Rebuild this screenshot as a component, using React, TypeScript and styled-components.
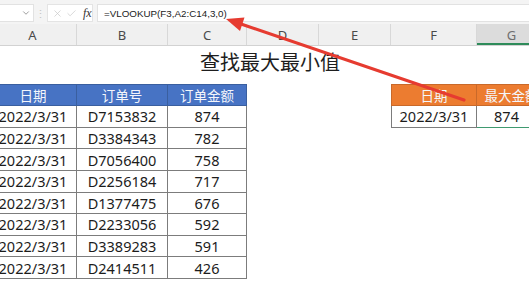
import { Fragment } from 'react';
import styled, { createGlobalStyle } from 'styled-components';
import { Check, ChevronDown, X } from 'lucide-react';

const COLS = '88px 91px 79px 72px 72px 86px 70px';

const GlobalStyle = createGlobalStyle`
  html, body { margin: 0; padding: 0; background: #fff; overflow: hidden; }
  body { font-family: "Noto Sans", "Noto Sans CJK SC", sans-serif; }
`;

const Page = styled.div`
  position: relative;
  width: 529px;
  height: 284px;
  overflow: hidden;
  background: #fff;
`;

const FormulaBar = styled.div`
  height: 24px;
  box-sizing: border-box;
  padding: 4px 0 2px 0;
  display: flex;
  align-items: stretch;
  background: #f4f4f4;
`;

const NameBox = styled.div`
  width: 34px;
  box-sizing: border-box;
  background: #fff;
  border: 1px solid #e2e2e2;
  border-left: none;
  display: flex;
  align-items: center;
  justify-content: flex-end;
  padding-right: 2px;
  color: #8a8a8a;
`;

const Dots = styled.div`
  width: 13px;
  display: flex;
  align-items: center;
  justify-content: center;
  color: #c4c4c4;
  font-size: 11px;
  line-height: 1;
`;

const ButtonBox = styled.div`
  width: 46px;
  box-sizing: border-box;
  background: #fff;
  border: 1px solid #e4e4e4;
  display: flex;
  align-items: center;
  gap: 3px;
  padding-left: 4px;
  color: #c8c8c8;
`;

const Fx = styled.span`
  font-family: "Liberation Serif", serif;
  font-style: italic;
  font-size: 12px;
  color: #333;
  margin-left: 3px;
`;

const FormulaInput = styled.div`
  flex: 1;
  margin-left: 4px;
  box-sizing: border-box;
  background: #fff;
  border: 1px solid #e2e2e2;
  border-right: none;
  display: flex;
  align-items: center;
  padding-left: 6px;
  font-family: "Liberation Sans", Arial, sans-serif;
  font-size: 9.8px;
  color: #222;
`;

const ColumnHeaders = styled.div`
  display: grid;
  grid-template-columns: ${COLS};
  margin-left: -11px;
  height: 22px;
  background: #f0f0f0;
  border-bottom: 1px solid #d2d2d2;
  box-sizing: border-box;
`;

const ColHead = styled.div<{ $active?: boolean }>`
  display: flex;
  align-items: center;
  justify-content: center;
  font-family: "Noto Sans", sans-serif;
  font-size: 13px;
  color: ${(p) => (p.$active ? '#6e6e6e' : '#4a4a4a')};
  background: ${(p) => (p.$active ? '#dcdcdc' : 'transparent')};
  border-right: 1px solid #d8d8d8;
  box-shadow: ${(p) => (p.$active ? 'inset 0 -2px 0 #2e8b5a' : 'none')};
`;

const Sheet = styled.div`
  display: grid;
  grid-template-columns: ${COLS};
  grid-template-rows: 38px 22px repeat(8, 21.625px);
  margin-left: -11px;
`;

const Title = styled.div`
  grid-column: 1 / -1;
  display: flex;
  align-items: center;
  justify-content: center;
  padding: 0 0 7px 4px;
  font-size: 20px;
  color: #1e1e1e;
  font-family: "Noto Sans CJK SC", sans-serif;
`;

const Cell = styled.div<{ $fill?: string; $top?: boolean; $left?: boolean; $line?: string; $shift?: number }>`
  display: flex;
  align-items: center;
  justify-content: center;
  box-sizing: border-box;
  white-space: nowrap;
  overflow: hidden;
  background: ${(p) => p.$fill || '#fff'};
  color: ${(p) => (p.$fill ? '#f4f6fb' : '#1c1c1c')};
  font-family: ${(p) => (p.$fill ? '"Noto Sans CJK SC", sans-serif' : '"Noto Sans", sans-serif')};
  font-size: ${(p) => (p.$fill ? '13.5px' : '14.5px')};
  border-right: 1px solid ${(p) => p.$line || '#7c7c7c'};
  border-bottom: 1px solid ${(p) => p.$line || '#7c7c7c'};
  border-top: ${(p) => (p.$top ? `1px solid ${p.$line || '#7c7c7c'}` : 'none')};
  border-left: ${(p) => (p.$left ? `1px solid ${p.$line || '#7c7c7c'}` : 'none')};
  padding-right: ${(p) => p.$shift || 0}px;
`;

const Blank = styled.div``;

// red annotation arrow drawn over the sheet
const Arrow = styled.svg`
  position: absolute;
  left: 0;
  top: 0;
  pointer-events: none;
`;

const rows = [
  ['D7153832', '874'],
  ['D3384343', '782'],
  ['D7056400', '758'],
  ['D2256184', '717'],
  ['D1377475', '676'],
  ['D2233056', '592'],
  ['D3389283', '591'],
  ['D2414511', '426'],
];

const BLUE = '#4773c4';
const BLUE_LINE = '#3a5f9f';
const ORANGE = '#ec7c30';

export default function App() {
  return (
    <Page>
      <GlobalStyle />
      <FormulaBar>
        <NameBox>
          <ChevronDown size={10} strokeWidth={2} />
        </NameBox>
        <Dots>⋮</Dots>
        <ButtonBox>
          <X size={11} strokeWidth={1.5} />
          <Check size={11} strokeWidth={1.5} />
          <Fx>fx</Fx>
        </ButtonBox>
        <FormulaInput>=VLOOKUP(F3,A2:C14,3,0)</FormulaInput>
      </FormulaBar>

      <ColumnHeaders>
        {['A', 'B', 'C', 'D', 'E', 'F'].map((c) => (
          <ColHead key={c}>{c}</ColHead>
        ))}
        <ColHead $active>G</ColHead>
      </ColumnHeaders>

      <Sheet>
        <Title>查找最大最小值</Title>

        <Cell $fill={BLUE} $line={BLUE_LINE} $top $left>日期</Cell>
        <Cell $fill={BLUE} $line={BLUE_LINE} $top>订单号</Cell>
        <Cell $fill={BLUE} $line={BLUE_LINE} $top>订单金额</Cell>
        <Blank />
        <Blank />
        <Cell $fill={ORANGE} $line="#c9692a" $top $left>日期</Cell>
        <Cell $fill={ORANGE} $line="#c9692a" $top>最大金额</Cell>

        {rows.map(([id, amount], i) => (
          <Fragment key={id}>
            <Cell $left>2022/3/31</Cell>
            <Cell>{id}</Cell>
            <Cell>{amount}</Cell>
            <Blank />
            <Blank />
            {i === 0 ? (
              <>
                <Cell $left>2022/3/31</Cell>
                <Cell $line="#3f9a70" $shift={10}>874</Cell>
              </>
            ) : (
              <>
                <Blank />
                <Blank />
              </>
            )}
          </Fragment>
        ))}
      </Sheet>

      <Arrow width="529" height="284" viewBox="0 0 529 284">
        <line x1="241" y1="24" x2="464" y2="100" stroke="#e63b30" strokeWidth="3.2" strokeLinecap="round" />
        <polygon points="226,19 240,31 244.5,17.5" fill="#e63b30" />
      </Arrow>
    </Page>
  );
}
